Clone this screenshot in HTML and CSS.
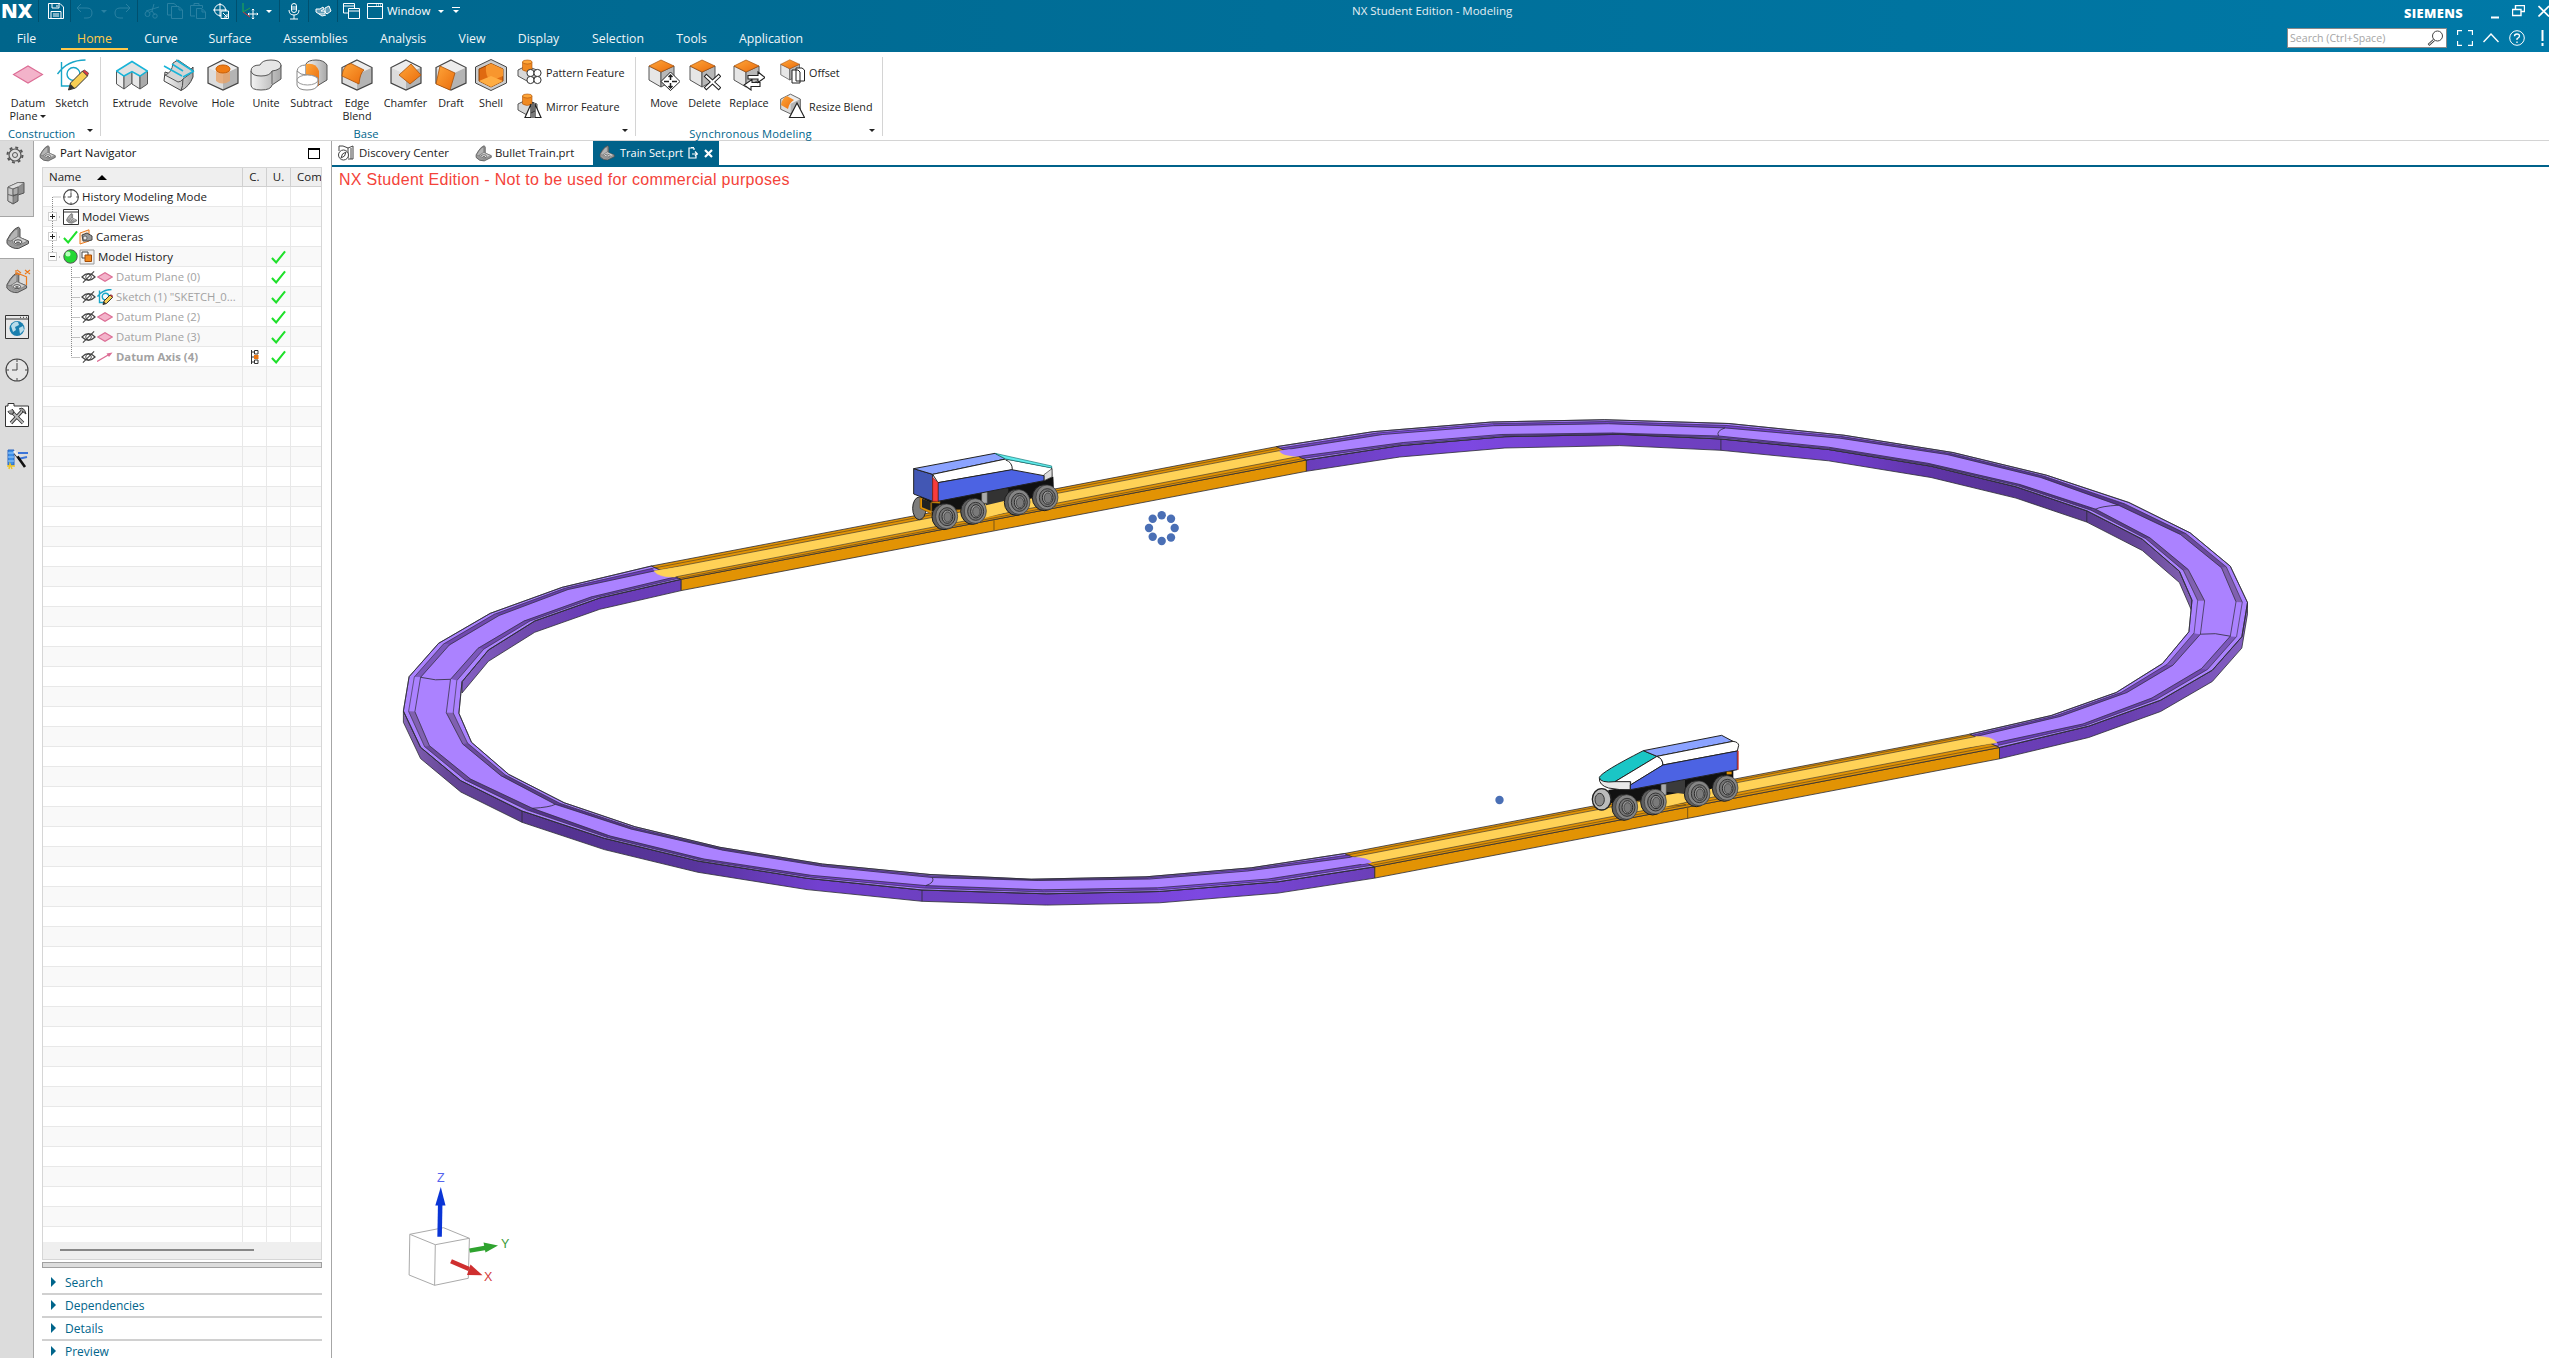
FILE: index.html
```html
<!DOCTYPE html>
<html lang="en">
<head>
<meta charset="utf-8">
<title>NX Student Edition - Modeling</title>
<link rel="stylesheet" href="styles.css">
</head>
<body>
<svg class="defs" width="0" height="0">
  <defs>
    <linearGradient id="steel" x1="0" y1="0" x2="1" y2="0"><stop offset="0" stop-color="#f4f4f4"/><stop offset="1" stop-color="#a8a8a8"/></linearGradient>
    <linearGradient id="orange" x1="0" y1="0" x2="1" y2="1"><stop offset="0" stop-color="#ffa63a"/><stop offset="1" stop-color="#ea6c0c"/></linearGradient>
    <symbol id="cube" viewBox="0 0 32 32">
      <path d="M16 1 31 8.500 16 15.500 1 8.500z" fill="#ececec"/><path d="M1 8.500 16 15.500V31L1 24z" fill="#dcdcdc"/><path d="M31 8.500 16 15.500V31L31 24z" fill="#b4b4b4"/>
      <path d="M16 1 31 8.500V24L16 31 1 24V8.500z" fill="none" stroke="#444" stroke-width="1.200"/>
    </symbol>
    <symbol id="topcube" viewBox="0 0 32 32">
      <path d="M1 7 13 13V28L1 21z" fill="#e6e6e6" stroke="#555"/><path d="M26 7 13 13V28L26 21z" fill="#b8b8b8" stroke="#555"/><path d="M13 1 26 7 13 13 1 7z" fill="url(#orange)" stroke="#a8500a" stroke-width=".7"/>
    </symbol>
    <symbol id="part" viewBox="0 0 24 24">
      <path d="M1.500 14 5 8Q9 2 13 1L14.500 3V11.500L23 15V17.500L13 22.500Q6 23 1.500 17.500z" fill="#9a9a9a" stroke="#4c4c4c"/>
      <path d="M2 14 5.500 8.500Q9 3 12.500 2.500V10.500L7 14Q5 16 2 14z" fill="#b4b4b4" stroke="#555" stroke-width=".6"/><path d="M12.500 10.500 22 15 13 19.500Q7 20 7 14z" fill="#d2d2d2" stroke="#666" stroke-width=".6"/><ellipse cx="12.500" cy="16" rx="4" ry="2.200" fill="#eee" stroke="#444"/><ellipse cx="12.500" cy="16.400" rx="2" ry="1" fill="#666"/>
    </symbol>
    <symbol id="clock" viewBox="0 0 24 24"><circle cx="12" cy="12" r="11" fill="#fff" fill-opacity=".3" stroke="#444" stroke-width="1.100" class="keep"/><path d="M12 5V12H7M12 1V4M12 20V23M1 12H4M20 12H23" fill="none" stroke="#444" class="keep"/></symbol>
    <symbol id="plane" viewBox="0 0 32 20"><path d="M1.500 10 16 1.500 30.500 10 16 18.500z" fill="#f3b3ca" stroke="#dc6d95" stroke-width="1.100" class="keep"/></symbol>
    <symbol id="sketch" viewBox="0 0 32 32">
      <path d="M5 3V27H19M1 15Q11 1 29 1" fill="none" stroke="#18a6c8" stroke-width="1.400" class="keep"/><circle cx="17" cy="15" r="6.500" fill="none" stroke="#18a6c8" stroke-width="1.400" class="keep"/>
      <path d="M12 31 14 24 26 12 31 17 19 29z" fill="#f8cf55" stroke="#333" class="keep"/><path d="M26 12 28 11 32 14 31 17z" fill="#e23b45" stroke="#333" stroke-width=".6"/><path d="M12 31 14 25 18 29z" fill="#333"/>
    </symbol>
    <symbol id="hidden" viewBox="0 0 16 14"><path d="M1 7Q8 0 15 7Q8 14 1 7z" fill="none" stroke="#444" stroke-width="1.200"/><circle cx="8" cy="7" r="3" fill="none" stroke="#444"/><path d="M2 13 14 1" stroke="#444" stroke-width="1.200"/></symbol>
    <symbol id="check" viewBox="0 0 16 14"><path d="M1 8 5.500 12.800 15 1" fill="none" stroke="#1fe02b" stroke-width="2.200"/></symbol>
    <symbol id="peg" viewBox="0 0 24 26">
      <path d="M1 11 9 7 20 11V17L10 22 1 17z" fill="#d8d8d8" stroke="#555"/><path d="M5.500 3V11Q10 14 15 11V3z" fill="#f08a22" stroke="#a8500a" stroke-width=".6"/><ellipse cx="10.300" cy="3" rx="4.800" ry="2" fill="#ffa63a" stroke="#a8500a" stroke-width=".6"/>
    </symbol>
  </defs>
</svg>

<header class="app-header">
  <div class="title-row">
    <div class="quick-bar">
      <div class="qgroup q-logo">NX</div>
      <div class="qgroup q-save"><svg width="16" height="16" viewBox="0 0 16 16"><path d="M.5.500H12L15.500 4V15.500H.5zM4 .5V5H11V.5M3 15.500V8.500H13V15.500M5 11H11M5 13H11M9 2V4" /></svg></div>
      <div class="qgroup q-undo dim"><svg width="17" height="16" viewBox="0 0 17 16"><path d="M5 1 1 5 5 9M1 5H11Q16 5 16 10T11 15H8"/></svg><i class="caret"></i><svg width="17" height="16" viewBox="0 0 17 16"><path d="M12 1 16 5 12 9M16 5H6Q1 5 1 10T6 15H9"/></svg></div>
      <div class="qgroup q-edit">
        <svg class="dim" width="16" height="16" viewBox="0 0 16 16"><path d="M2 8 15 4M10 1 8 8 11 12"/><circle cx="3.500" cy="11" r="2.500"/><circle cx="11" cy="13" r="2.200"/><path d="M5.500 9.500 8 8"/></svg>
        <svg class="dim" width="16" height="16" viewBox="0 0 16 16"><path d="M4 12H.5V.5H7L10 3M4.500 3.500H12L15.500 7V15.500H4.500zM12 4V7H15"/></svg>
        <svg class="dim" width="16" height="16" viewBox="0 0 16 16"><path d="M5 13H.5V2.500H12.500V5M4 2V.5H9V2M6.500 5.500H12L15.500 9V15.500H6.500zM12 6V9H15"/></svg>
        <svg width="16" height="16" viewBox="0 0 16 16"><circle cx="7" cy="7" r="5.500"/><path d="M7 0V14M0 7H14"/><path d="M8 8H15.500V15.500H8zM10 10 14 14M14 11V14H11" fill="#00678d"/></svg>
      </div>
      <div class="qgroup q-axes"><svg width="18" height="17" viewBox="0 0 18 17"><path d="M2 0V9" stroke="#25b04a"/><path d="M2 9 9 14" stroke="#d42f36"/><path d="M2 9 9 5" stroke="#25a04a"/><path d="M12 6V16M7 11H17M10.800 7.200 12 6 13.200 7.200M10.800 14.800 12 16 13.200 14.800M8.200 9.800 7 11 8.200 12.200M15.800 9.800 17 11 15.800 12.200"/></svg><i class="caret"></i></div>
      <div class="qgroup q-mic"><svg width="12" height="17" viewBox="0 0 12 17"><rect x="3.500" y=".5" width="5" height="9" rx="2.500"/><path d="M1 7Q1 12 6 12T11 7M6 12V16M2 16H10M4 4H8M4 6H8"/></svg></div>
      <div class="qgroup q-hand"><svg width="17" height="14" viewBox="0 0 17 14"><path d="M1 5H5L8 3 9 5 6 7H10V10H4L1 8zM10 4 14 2 16 7 12 10 10 8zM4 10 7 12 11 11" fill="#5f9db8"/></svg></div>
      <div class="qgroup q-windows">
        <svg width="17" height="16" viewBox="0 0 17 16"><path d="M5 10H.5V.5H11.500V5M.5 3H11.500"/><path d="M5.500 5.500H16.500V15.500H5.500zM5.500 8H16.500" fill="#00678d"/></svg>
        <svg width="16" height="16" viewBox="0 0 16 16"><path d="M.5.500H15.500V15.500H.5zM.5 3.500H15.500M9 2H10M11 2H12M13 2H14"/></svg>
        <span>Window</span><i class="caret"></i><i class="caret over"></i>
      </div>
    </div>
    <div class="app-title">NX Student Edition - Modeling</div>
    <div class="window-tools"><b>SIEMENS</b>
      <svg width="8" height="16" viewBox="0 0 8 16"><path d="M0 14.500H8" stroke-width="2"/></svg>
      <svg width="13" height="12" viewBox="0 0 13 12"><path d="M3.500 4V.5H12.500V6.500H9M.5 4.500H9V10.500H.5z" stroke-width="1.400"/></svg>
      <svg width="11" height="12" viewBox="0 0 11 12"><path d="M.5 1 11 11.500M.5 11.500 11 1" stroke-width="1.600"/></svg>
    </div>
  </div>
  <div class="menu-row">
    <nav><a class="m1">File</a><a class="m2 on">Home</a><a class="m3">Curve</a><a class="m4">Surface</a><a class="m5">Assemblies</a><a class="m6">Analysis</a><a class="m7">View</a><a class="m8">Display</a><a class="m9">Selection</a><a class="m10">Tools</a><a class="m11">Application</a></nav>
    <div class="menu-tools">
      <div class="search"><span>Search (Ctrl+Space)</span><svg width="17" height="16" viewBox="0 0 17 16"><circle cx="10.500" cy="6" r="5" stroke="#444"/><path d="M7 10 1.500 15" stroke="#444" stroke-width="2.500"/><path d="M7 10 2 14.500" stroke="#fff"/></svg></div>
      <svg width="16" height="16" viewBox="0 0 16 16"><path d="M.5 5V.5H5M11 .5H15.500V5M15.500 11V15.500H11M5 15.500H.5V11" stroke-width="1.300"/></svg>
      <svg width="16" height="10" viewBox="0 0 16 10"><path d="M.5 9 8 1 15.500 9" stroke-width="1.400"/></svg>
      <svg width="16" height="16" viewBox="0 0 16 16"><circle cx="8" cy="8" r="7.300"/><path d="M5.500 6.200Q5.500 4 8 4T10.500 6Q10.500 7.300 8 8.700V10M8 11.500V13" stroke-width="1.300"/></svg>
      <svg class="alert" width="3" height="16" viewBox="0 0 3 16"><path d="M1.500 0V11M1.500 13V16" stroke-width="2"/></svg>
    </div>
  </div>
</header>

<section class="ribbon">
  <div class="group g-con">
    <div class="tools">
      <div class="btn w56"><svg width="32" height="32" viewBox="0 0 32 32"><use href="#plane" y="5.500" width="32" height="20"/></svg><span>Datum<br>Plane<i class="caret"></i></span></div>
      <div class="btn w32"><svg width="33" height="32"><use href="#sketch" width="33" height="32"/></svg><span>Sketch</span></div>
    </div>
    <div class="group-name">Construction</div><i class="caret more"></i>
  </div>
  <div class="group g-base">
    <div class="tools">
      <div class="btn w46"><svg width="32" height="32" viewBox="0 0 32 32"><path d="M.5 12 8 17V30L.5 25z" fill="#eee" stroke="#555"/><path d="M8 17 16 12V24L8 30z" fill="#c4c4c4" stroke="#555"/><path d="M16 12 24 17V30L16 25z" fill="#e6e6e6" stroke="#555"/><path d="M31.500 12 24 17V30L31.500 25z" fill="#aaa" stroke="#555"/><path d="M.7 12 16 2.500 31.300 12 24 17 16 12.500 8 17z" fill="#e2e2e2" stroke="#18b4d8" stroke-width="1.500"/></svg><span>Extrude</span></div>
      <div class="btn w47"><svg width="32" height="32" viewBox="0 0 32 32"><path d="M2 13 20 19 30 8V18Q26 28 18 31.500L1 22z" fill="url(#steel)" stroke="#444"/><path d="M20 19Q20 28 18 31.500" stroke="#444" fill="none"/><path d="M2 16Q9 14 10 4L15 1 31 12 20 20Q18 23 15 23z" fill="#d4d4d4" stroke="#555"/><path d="M1 7 19 17M13 1 30 12M20 18 31 12M9 5 20 12" stroke="#18b4d8" stroke-width="1.500" fill="none"/></svg><span>Revolve</span></div>
      <div class="btn w42"><svg width="32" height="32" viewBox="0 0 32 32"><use href="#cube"/><path d="M9 9V22Q15 27 23 22V9z" fill="#e8a368" fill-opacity=".8"/><ellipse cx="16" cy="10" rx="7" ry="4" fill="#f07c14" stroke="#c85e06"/></svg><span>Hole</span></div>
      <div class="btn w44"><svg width="32" height="32" viewBox="0 0 32 32"><path d="M1 12V26Q1 31 11 31T22 26L31 20V6z" fill="url(#steel)" stroke="#555"/><path d="M1 12Q1 6 10 6Q12 1 21 1T31 6Q31 11 22 12Q20 17 11 17T1 12z" fill="#e6e6e6" stroke="#555"/><path d="M22 12V25" stroke="#666"/></svg><span>Unite</span></div>
      <div class="btn w47"><svg width="32" height="32" viewBox="0 0 32 32"><path d="M10 5V20L21 27 31 21V6Q28 1 20 1T10 5z" fill="url(#steel)" stroke="#555"/><path d="M10 5Q20 3 23 12V27L10 20z" fill="url(#orange)"/><path d="M1 12V26Q2 31 11 31T22 26V19Q18 16 11 16T1 12Q2 6 10 6" fill="#fff" stroke="#888"/><ellipse cx="11.500" cy="21" rx="10.500" ry="5" fill="#fff" stroke="#999"/></svg><span>Subtract</span></div>
      <div class="btn w44"><svg width="32" height="32" viewBox="0 0 32 32"><use href="#cube"/><path d="M10 4.500 23 11Q19 14 18 25L1 17Q2 6 10 4.500z" fill="url(#orange)" stroke="#aa5008" stroke-width=".8"/></svg><span>Edge<br>Blend</span></div>
      <div class="btn w53"><svg width="32" height="32" viewBox="0 0 32 32"><use href="#cube"/><path d="M21 5 31 16 20 25 9 16z" fill="url(#orange)" stroke="#aa5008" stroke-width=".8"/></svg><span>Chamfer</span></div>
      <div class="btn w38"><svg width="32" height="32" viewBox="0 0 32 32"><use href="#cube"/><path d="M5 7 20 14 15 31 1 25z" fill="url(#orange)" stroke="#aa5008" stroke-width=".8"/></svg><span>Draft</span></div>
      <div class="btn w42"><svg width="32" height="32" viewBox="0 0 32 32"><path d="M16 .5 31.500 8V24L16 31.500.5 24V8z" fill="#ccc" stroke="#444"/><path d="M16 4.500 28 10V22L16 28 4 22V10z" fill="#e06a10" stroke="#8a4208"/><path d="M16 4.500 28 10V17L16 22Q10 18 11 7z" fill="#f8962e"/><path d="M4 22 16 17 28 22 16 28z" fill="#ffad42"/></svg><span>Shell</span></div>
      <div class="stack">
        <div><svg width="25" height="26" viewBox="0 0 25 26"><use href="#peg" width="24" height="26"/><g fill="#fff" stroke="#333"><circle cx="13.500" cy="14" r="3.600"/><circle cx="20.500" cy="14" r="3.600"/><circle cx="13.500" cy="21" r="3.600"/><circle cx="20.500" cy="21" r="3.600"/></g></svg>Pattern Feature</div>
        <div><svg width="25" height="26" viewBox="0 0 25 26"><use href="#peg" width="24" height="26"/><path d="M8 24.500 14 11V24.500zM24 24.500 18 11V24.500zM16 9V25" fill="#fff" stroke="#222" stroke-width="1.200"/></svg>Mirror Feature</div>
      </div>
    </div>
    <div class="group-name base-name">Base</div><i class="caret more"></i>
  </div>
  <div class="group g-sync">
    <div class="tools">
      <div class="btn w48"><svg width="32" height="32" viewBox="0 0 32 32"><use href="#topcube"/><path d="M22.500 13 32 22.500 22.500 31.500 13 22.500z" fill="#fff" stroke="#222"/><path d="M22.500 16V21M22.500 24V29M16 22.500H21M24 22.500H29M20.500 18 22.500 16 24.500 18M20.500 27 22.500 29 24.500 27" fill="none" stroke="#222" stroke-width="1.500"/></svg><span>Move</span></div>
      <div class="btn w33"><svg width="32" height="32" viewBox="0 0 32 32"><use href="#topcube"/><path d="M16 16 31 30M31 16 16 30" stroke="#222" stroke-width="4"/><path d="M16.700 16.700 30.300 29.300M30.300 16.700 16.700 29.300" stroke="#fff" stroke-width="2"/></svg><span>Delete</span></div>
      <div class="btn w56"><svg width="32" height="32" viewBox="0 0 32 32"><use href="#topcube"/><path d="M15 16.500H25V13L32 18.500 25 23.500V20H15zM27 23.500H19V20.500L11 26 18 31V27.500H27z" fill="#fff" stroke="#222" stroke-width="1.100"/></svg><span>Replace</span></div>
      <div class="stack">
        <div><svg width="25" height="26" viewBox="0 0 25 26"><use href="#topcube" width="24" height="24"/><path d="M12 11H18L20 13V24H12zM16 9H22L24.500 11V22H16z" fill="#fff" stroke="#222"/></svg>Offset</div>
        <div><svg width="25" height="26" viewBox="0 0 25 26"><use href="#cube" width="21" height="22"/><path d="M7 3 14 7Q9 10 8 16L1 12Q2 5 7 3z" fill="url(#orange)"/><path d="M17 10 24.500 24.500H9.500z" fill="#fff" stroke="#222" stroke-width="1.200"/></svg>Resize Blend</div>
      </div>
    </div>
    <div class="group-name">Synchronous Modeling</div><i class="caret more"></i>
  </div>
</section>

<main class="workspace">
  <aside class="resource-bar">
    <div class="res r1"><svg width="18" height="18" viewBox="0 0 18 18"><circle cx="9" cy="9" r="6" fill="none" stroke="#555" stroke-width="1.200"/><circle cx="9" cy="9" r="7.500" fill="none" stroke="#555" stroke-width="2" stroke-dasharray="2.900 3"/><circle cx="9" cy="9" r="2.500" fill="none" stroke="#555"/></svg></div>
    <div class="res r2"><svg width="18" height="24" viewBox="0 0 18 24"><path d="M1 6 11 1.500 17 1.500V12L11 14V20L6 23 1 20z" fill="#8f8f8f" stroke="#555"/><path d="M1 6 11 1.500 17 2 11 6 6 8z" fill="#dedede" stroke="#666" stroke-width=".6"/><path d="M1 6.500 6 8V22.500L1 20z" fill="#c6c6c6" stroke="#555" stroke-width=".6"/><path d="M6 8 11 6V13L6 15zM1 13.500 6 15 11 13" fill="#ababab" stroke="#555" stroke-width=".8"/></svg></div>
    <div class="res r3"><svg width="25" height="24"><use href="#part" width="25" height="24"/></svg></div>
    <div class="res r4"><svg width="26" height="26" viewBox="0 0 26 26"><use href="#part" y="3" width="23" height="22"/><path d="M11 1 11 6M21.500 8V16M12 4 22 8M12 1 16 4M20 1 25 5M25 1 20 5M11 4 15 6" stroke="#ec7a1c" stroke-width="1.200" fill="none"/></svg></div>
    <div class="res r5"><svg width="24" height="24" viewBox="0 0 24 24"><path d="M.5.500H23.500V23.500H.5zM.5 4H23.500M15 2.300H16M18 2.300H19M21 2.300H22" fill="#e8e8e8" stroke="#333"/><circle cx="12" cy="13.500" r="7.500" fill="#1a7fae"/><path d="M6 11Q9 6 13 7L14 10 10 12 11 15 8 17zM14 13 18 11 19 15 15 19z" fill="#b8dcea"/></svg></div>
    <div class="res r6"><svg width="24" height="24"><use href="#clock" width="24" height="24"/></svg></div>
    <div class="res r7"><svg width="24" height="24" viewBox="0 0 24 24"><path d="M.5 23.500V3H3V.5H9V3H23.500V23.500z" fill="#fff" stroke="#333"/><path d="M6 20 18 7M18 20 7 9" stroke="#333" stroke-width="3.400"/><path d="M6 20 18 7M18 20 7 9" stroke="#bbb" stroke-width="1.800"/><path d="M3 8Q4 12 8 11Q10 8 7 6M14 6Q19 3 21 11L17 8" fill="#999" stroke="#333"/></svg></div>
    <div class="res r8"><svg width="24" height="22" viewBox="0 0 24 22"><path d="M2 2H8V17H2z" fill="#3d8fe6" stroke="#2c66c0"/><path d="M2 5H8M2 9H8M2 13H8" stroke="#9dd0ff"/><path d="M22 5H12M21 9 12 11" stroke="#3c74d8" stroke-width="2"/><path d="M1 18H9M3 21 4 16 6 21" stroke="#eec52a" stroke-width="1.500" fill="none"/><path d="M9 5 19 19" stroke="#111" stroke-width="2.600"/><path d="M8 3 12 8" stroke="#eee" stroke-width="2.600"/></svg></div>
  </aside>

  <section class="navigator">
    <div class="nav-title"><svg width="17" height="17"><use href="#part" width="17" height="17"/></svg><span>Part Navigator</span><i class="maximize"></i></div>
    <div class="grid">
      <div class="row head"><span class="name">Name<i class="sort"></i></span><span>C.</span><span>U.</span><span>Com</span></div>
      <div class="rows">
        <div class="row"><span class="name l0"><svg width="16" height="16"><use href="#clock" width="16" height="16"/></svg>History Modeling Mode</span><span></span><span></span><span></span></div>
        <div class="row"><span class="name l0"><i class="exp plus"></i><svg width="16" height="16" viewBox="0 0 16 16"><path d="M.5.500H15.500V15.500H.5zM.5 3H15.500" fill="#fff" stroke="#333"/><use href="#part" x="3" y="4" width="11" height="11"/></svg>Model Views</span><span></span><span></span><span></span></div>
        <div class="row"><span class="name l0"><i class="exp plus"></i><svg width="15" height="14"><use href="#check" width="15" height="14"/></svg><svg width="14" height="16" viewBox="0 0 14 16"><path d="M1 4 10 .8V12L1 15z" fill="#fce9d6" stroke="#ec7a1c"/><path d="M3 6 8 4 13 7V11L9 12 4 12z" fill="#999" stroke="#444"/><circle cx="6" cy="9" r="2" fill="#e8e8e8" stroke="#444" stroke-width=".7"/></svg>Cameras</span><span></span><span></span><span></span></div>
        <div class="row"><span class="name l0"><i class="exp"></i><svg width="15" height="15" viewBox="0 0 15 15"><circle cx="7.500" cy="7.500" r="6.700" fill="#22d834" stroke="#555"/><circle cx="5" cy="5" r="2.500" fill="#b6ffbb"/></svg><svg width="16" height="16" viewBox="0 0 16 16"><path d="M1 1H15V15H1z" fill="#f0f0f0" stroke="#999"/><path d="M3 3H9V9H3z" fill="#fff" stroke="#444"/><path d="M6 6H12.500V12.500H6z" fill="#f28a1e" stroke="#a34d08"/></svg>Model History</span><span></span><span><svg width="15" height="14"><use href="#check"/></svg></span><span></span></div>
        <div class="row off"><span class="name l1"><svg width="15" height="14"><use href="#hidden"/></svg><svg width="16" height="10"><use href="#plane"/></svg>Datum Plane (0)</span><span></span><span><svg width="15" height="14"><use href="#check"/></svg></span><span></span></div>
        <div class="row off"><span class="name l1"><svg width="15" height="14"><use href="#hidden"/></svg><svg width="16" height="16"><use href="#sketch"/></svg>Sketch (1) "SKETCH_0...</span><span></span><span><svg width="15" height="14"><use href="#check"/></svg></span><span></span></div>
        <div class="row off"><span class="name l1"><svg width="15" height="14"><use href="#hidden"/></svg><svg width="16" height="10"><use href="#plane"/></svg>Datum Plane (2)</span><span></span><span><svg width="15" height="14"><use href="#check"/></svg></span><span></span></div>
        <div class="row off"><span class="name l1"><svg width="15" height="14"><use href="#hidden"/></svg><svg width="16" height="10"><use href="#plane"/></svg>Datum Plane (3)</span><span></span><span><svg width="15" height="14"><use href="#check"/></svg></span><span></span></div>
        <div class="row off strong"><span class="name l1"><svg width="15" height="14"><use href="#hidden"/></svg><svg width="16" height="10" viewBox="0 0 16 10"><path d="M0 9.500 12 2.500" stroke="#dc6d95" stroke-width="1.300"/><path d="M15.500.5 12 5 9.500 1.500z" fill="#dc6d95"/></svg>Datum Axis (4)</span><span><svg width="9" height="14" viewBox="0 0 9 14"><path d="M1.500 0V14M1.500 2H4M1.500 7H4M1.500 12H4M4.500.5H8V4H4.500zM4.500 10H8V13.500H4.500z" fill="none" stroke="#333"/><path d="M4 5H8.500V9H4z" fill="#ea7410"/></svg></span><span><svg width="15" height="14"><use href="#check"/></svg></span><span></span></div>
        <svg class="tree-lines" width="60" height="180"><path d="M9.500 10V72M10.500 10H18M16 30H18M16 50H18M16 70H18M28.500 80V170.500M29.500 90.500H37M29.500 110.500H37M29.500 130.500H37M29.500 150.500H37M29.500 170.500H37" fill="none" stroke="#8a8a8a" stroke-dasharray="1 1"/></svg>
      </div>
      <div class="hscroll"><i></i></div>
    </div>
    <div class="splitter"></div>
    <div class="drawer">Search</div><div class="drawer">Dependencies</div><div class="drawer">Details</div><div class="drawer">Preview</div>
  </section>

  <section class="viewport">
    <div class="tabs">
      <div class="tab t1"><svg width="16" height="16" viewBox="0 0 16 16"><path d="M1 1H5L10 3 15 1V14H10M1 1V6M10 3V13M13 3V14" fill="none" stroke="#444"/><circle cx="5.500" cy="10" r="5" fill="#fff" stroke="#444"/><path d="M3 13 4.500 9 8 7 6.500 11z" fill="none" stroke="#444"/></svg><span>Discovery Center</span></div>
      <div class="tab t2"><svg width="17" height="17"><use href="#part"/></svg><span>Bullet Train.prt</span></div>
      <div class="tab t3 on"><svg width="16" height="16"><use href="#part"/></svg><span>Train Set.prt</span><svg class="out" width="10" height="12" viewBox="0 0 10 12"><path d="M6 1H1V11H8V9M6 1V3M3 .5H6M4 7H9M7 4.500 9.300 7 7 9" fill="none" stroke="#fff" stroke-width="1.200"/></svg><svg width="9" height="9" viewBox="0 0 9 9"><path d="M1 1 8 8M8 1 1 8" stroke="#fff" stroke-width="2.200"/></svg></div>
    </div>
    <div class="canvas">
      <svg class="scene" width="2217" height="1191" viewBox="332 167 2217 1191">
        <defs>
          <linearGradient id="g-bottom" gradientUnits="userSpaceOnUse" x1="403" x2="1375" y1="0" y2="0"><stop offset="0" stop-color="#8464b4"/><stop offset=".05" stop-color="#644596"/><stop offset=".17" stop-color="#543391"/><stop offset=".3" stop-color="#58359c"/><stop offset=".43" stop-color="#7340d0"/><stop offset=".54" stop-color="#6d40c0"/><stop offset=".68" stop-color="#7140c6"/><stop offset=".82" stop-color="#7d48e2"/><stop offset="1" stop-color="#6b3fb8"/></linearGradient>
          <linearGradient id="g-top" gradientUnits="userSpaceOnUse" x1="1306" x2="2193" y1="0" y2="0"><stop offset="0" stop-color="#693dba"/><stop offset=".18" stop-color="#7d48e2"/><stop offset=".33" stop-color="#7340c6"/><stop offset=".47" stop-color="#6d40be"/><stop offset=".6" stop-color="#7340d0"/><stop offset=".7" stop-color="#6035a8"/><stop offset=".82" stop-color="#54338f"/><stop offset=".93" stop-color="#644596"/><stop offset="1" stop-color="#8464b4"/></linearGradient>
          <linearGradient id="g-left" gradientUnits="userSpaceOnUse" x1="460" x2="681" y1="0" y2="0"><stop offset="0" stop-color="#8460c2"/><stop offset=".3" stop-color="#704aae"/><stop offset=".6" stop-color="#693ab8"/><stop offset="1" stop-color="#6b3fb8"/></linearGradient>
          <linearGradient id="g-right" gradientUnits="userSpaceOnUse" x1="2000" x2="2248" y1="0" y2="0"><stop offset="0" stop-color="#6a3db8"/><stop offset=".5" stop-color="#693fb0"/><stop offset="1" stop-color="#8460c2"/></linearGradient>
          <g id="wheel"><ellipse cx="-3" cy="1" rx="36" ry="39" fill="#5e5e5e" stroke="#1c1c1c" stroke-width="3"/><ellipse cx="5" rx="33" ry="37" fill="#858585" stroke="#333" stroke-width="2"/><ellipse cx="6" cy="1" rx="24" ry="27" fill="#757575" stroke="#333" stroke-width="3"/><ellipse cx="7" cy="1" rx="16" ry="20" fill="#949494" stroke="#2c2c2c" stroke-width="3"/><ellipse cx="8" cy="2" rx="11" ry="15" fill="#7a7a7a" stroke="#333" stroke-width="2"/></g>
        </defs>
        <g id="track"></g>
        <g transform="translate(880 420) scale(.33333)" stroke-linejoin="round">
          <path d="M342 296V331" stroke="#7a5516" stroke-width="3"/>
          <ellipse cx="118" cy="265" rx="20" ry="34" fill="#7d7d7d" stroke="#222" stroke-width="3"/>
          <path d="M120 225 520 170 522 215 380 255 160 275 122 262z" fill="#111"/>
          <path d="M310 250 375 240 385 275 290 300 318 250z" fill="#ffd257"/><path d="M318 205H385V240L318 256z" fill="#333"/><path d="M305 215H322V250H305z" fill="#aaa" stroke="#444" stroke-width="2"/>
          <path d="M120 232V265L155 282V245L180 242V250L152 248" fill="#e29304" stroke="#7a5516" stroke-width="2"/><path d="M126 236 152 246V272L126 262z" fill="#222"/>
          <path d="M101 146 158 163V244L101 222z" fill="#4257b4" stroke="#222" stroke-width="3"/>
          <path d="M101 146 345 100 377 117 158 163z" fill="#8ba3ff" stroke="#222" stroke-width="3"/>
          <path d="M158 163 377 117 515 143 516 170 492 182 395 150 174 188z" fill="#fff" stroke="#222" stroke-width="3"/>
          <path d="M345 100 515 138V144L377 117z" fill="#62ecec" stroke="#147474" stroke-width="2"/>
          <path d="M492 164 516 146V171L492 182z" fill="#ddd" stroke="#333" stroke-width="2"/>
          <path d="M174 188 395 149 492 167V182L174 244z" fill="#4c63e3" stroke="#222" stroke-width="3"/><path d="M377 120Q397 126 397 149" fill="none" stroke="#222" stroke-width="3"/>
          <path d="M158 172 174 188V244H158z" fill="#f83c3c" stroke="#8b2020" stroke-width="2"/>
          <use href="#wheel" x="195" y="289"/><use href="#wheel" x="281" y="273"/><use href="#wheel" x="412" y="246"/><use href="#wheel" x="496" y="232"/>
        </g>
        <g transform="translate(1560 710) scale(.33333)" stroke-linejoin="round">
          <path d="M383 292V327" stroke="#7a5516" stroke-width="3"/><path d="M330 262 378 285 310 290" fill="none" stroke="#7a5516" stroke-width="3"/>
          <path d="M145 240 520 180V215L380 260 150 280z" fill="#111"/>
          <path d="M316 256 372 246 378 275 310 292z" fill="#ffd257"/><path d="M318 210H375V252L318 245z" fill="#3b3b3b"/><path d="M303 222H319V255H303z" fill="#aaa" stroke="#444" stroke-width="2"/>
          <ellipse cx="125" cy="268" rx="28" ry="32" fill="#bbb" stroke="#222" stroke-width="4"/><ellipse cx="119" cy="269" rx="14" ry="19" fill="#8d8d8d" stroke="#333" stroke-width="3"/>
          <path d="M118 205Q117 225 145 234Q180 241 211 239V214L150 212z" fill="#e8e8e8" stroke="#222" stroke-width="3"/>
          <path d="M118 202Q126 185 250 122L291 139 165 215Q120 220 118 202z" fill="#1ac6c6" stroke="#222" stroke-width="3"/>
          <path d="M165 215 291 139Q308 145 309 165L212 225V215z" fill="#fff" stroke="#222" stroke-width="3"/>
          <path d="M250 122 485 76 519 94 291 139z" fill="#8ba3ff" stroke="#222" stroke-width="3"/>
          <path d="M291 139 519 94Q535 96 536 106L532 123 309 165Q308 145 291 139z" fill="#fff" stroke="#222" stroke-width="3"/>
          <path d="M309 165 532 123V179L211 239V225z" fill="#4c63e3" stroke="#222" stroke-width="3"/><path d="M534 122V179" stroke="#d32f2f" stroke-width="4"/><path d="M500 185H515V193H500z" fill="#e29304"/>
          <use href="#wheel" x="195" y="291"/><use href="#wheel" x="281" y="275"/><use href="#wheel" x="412" y="250"/><use href="#wheel" x="496" y="234"/>
        </g>
        <g fill="#4a6fb5"><circle cx="1161.700" cy="515.300" r="4.200"/><circle cx="1171" cy="518.800" r="4.200"/><circle cx="1174.700" cy="528" r="4.200"/><circle cx="1171" cy="537.500" r="4.200"/><circle cx="1161.700" cy="541" r="4.200"/><circle cx="1152.700" cy="536.800" r="4.200"/><circle cx="1149" cy="528" r="4.200"/><circle cx="1152.700" cy="518.800" r="4.200"/><circle cx="1499.500" cy="800" r="4.200"/></g>
        <g class="triad">
          <path d="M443.500 1227.700 409.800 1234.300 409.100 1275 434.600 1285.300 468.300 1278.300 469.400 1238.300zM409.800 1234.300 435.300 1244.700 469.400 1238.300M435.300 1244.700 434.600 1285.300" fill="#fff" stroke="#aaa"/>
          <path d="M439.600 1236.700 440.200 1204" stroke="#0a35d6" stroke-width="4.500"/><path d="M435.300 1205.500 440.800 1187 445.500 1205.500z" fill="#0a35d6"/>
          <path d="M469.500 1250.600 486 1247.700" stroke="#2fa32f" stroke-width="4.500"/><path d="M483.500 1242.500 498 1245.600 485.500 1252.500z" fill="#2fa32f"/>
          <path d="M451 1261.300 469 1269" stroke="#cf2f2f" stroke-width="4.500"/><path d="M470.500 1264.500 482.500 1275.300 467 1275z" fill="#cf2f2f"/>
          <text x="437" y="1181.500" fill="#5565ee">Z</text><text x="501" y="1247.500" fill="#3b9c3b">Y</text><text x="484" y="1281" fill="#d43c3c">X</text>
        </g>
      </svg>
      <div class="watermark">NX Student Edition - Not to be used for commercial purposes</div>
    </div>
  </section>
</main>
<script src="track.js"></script>
</body>
</html>
```
FILE: styles.css
```css
* { box-sizing: border-box; }
body { margin: 0; width: 2549px; height: 1358px; overflow: hidden; background: #fff; color: #222; font: 11.4px/14px "Open Sans", "Noto Sans", sans-serif; display: flex; flex-direction: column; }
svg { flex: none; display: block; }
.defs { position: absolute; }
.keep { vector-effect: non-scaling-stroke; }
.caret { display: inline-block; border: 3px solid transparent; border-top-color: currentColor; border-bottom: 0; }

.app-header { height: 52px; flex: none; background: linear-gradient(90deg, #00658b, #0079a7); color: #fff; }
.app-header svg { fill: none; stroke: #fff; }
.title-row { height: 24px; display: flex; align-items: center; padding-bottom: 2px; }
.quick-bar { width: 1352px; flex: none; height: 22px; display: flex; }
.qgroup { display: flex; align-items: center; border-right: 1px solid #00506f; }
.q-logo { width: 39px; padding-left: 1px; font-size: 20px; font-weight: 800; }
.q-save { width: 32px; padding-left: 9px; }
.q-undo { width: 67px; padding: 0 6px 0 5px; justify-content: space-between; }
.q-undo.dim { color: #2a81a2; }
.app-header .dim svg, .app-header svg.dim { stroke: #2a81a2; }
.q-edit { width: 99px; padding: 0 7px 0 6px; justify-content: space-between; }
.q-axes { width: 43px; padding: 0 7px 0 4px; justify-content: space-between; }
.q-mic { width: 29px; padding-left: 8px; }
.q-hand { width: 29px; padding-left: 6px; }
.q-windows { padding-left: 5px; border: 0; gap: 7px; font-size: 11.500px; }
.q-windows span { margin-left: -3px; width: 44px; }
.q-windows .over { margin-left: 2px; position: relative; }
.over::before { content: ""; position: absolute; left: -4px; top: -6px; width: 8px; border-top: 1px solid #fff; }
.app-title { font-size: 11.500px; color: #e4eff4; white-space: nowrap; }
.window-tools { margin-left: auto; height: 22px; display: flex; align-items: center; }
.window-tools b { font-size: 12.800px; font-weight: 800; line-height: 22px; margin-right: 28px; letter-spacing: .4px; padding-top: 3px; }
.window-tools svg + svg { margin-left: 13px; }
.menu-row { height: 28px; display: flex; justify-content: space-between; }
nav { display: flex; font-size: 12.300px; line-height: 29px; }
nav a { text-align: center; white-space: nowrap; color: #f0f6f9; height: 26px; }
.m1 { width: 53px; } .m2 { width: 67px; margin: 0 8px; } .m3 { width: 50px; } .m4 { width: 88px; } .m5 { width: 83px; } .m6 { width: 92px; } .m7 { width: 46px; } .m8 { width: 87px; } .m9 { width: 72px; } .m10 { width: 75px; } .m11 { width: 84px; }
nav a.on { color: #ffc84a; border-bottom: 2px solid #ffc84a; }
.menu-tools { display: flex; align-items: center; height: 28px; gap: 10px; padding-right: 5px; }
.menu-tools .alert { margin-left: 6px; }
.search { width: 160px; height: 20px; background: #fff; border: 1px solid #888; display: flex; align-items: center; justify-content: space-between; padding: 0 2px; color: #a5a5a5; font-size: 10.600px; }

.ribbon { height: 89px; flex: none; display: flex; border-bottom: 1px solid #d4d4d4; font-size: 10.800px; line-height: 13px; }
.group { position: relative; height: 88px; padding-top: 7px; }
.group::after { content: ""; position: absolute; right: 0; top: 5px; height: 79px; border-right: 1px solid #d4d4d4; }
.g-con { width: 101px; } .g-base { width: 535px; padding-left: 8px; } .g-sync { width: 247px; padding-left: 4px; }
.tools { display: flex; height: 68px; }
.btn { display: flex; flex-direction: column; align-items: center; gap: 5px; text-align: center; white-space: nowrap; flex: none; }
.btn .caret { margin-left: 3px; vertical-align: 2px; }
.w32 { width: 32px; } .w33 { width: 33px; } .w38 { width: 38px; } .w42 { width: 42px; } .w44 { width: 44px; } .w46 { width: 46px; } .w47 { width: 47px; } .w48 { width: 48px; } .w53 { width: 53px; } .w56 { width: 56px; }
.stack { padding-left: 5px; display: flex; flex-direction: column; gap: 8px; white-space: nowrap; }
.g-sync .stack { padding-left: 3px; }
.stack div { display: flex; align-items: center; gap: 4px; height: 26px; }
.group-name { color: #00658b; text-align: center; padding-right: 18px; font-size: 11.200px; }
.g-sync .group-name { padding-right: 22px; letter-spacing: .15px; }
.base-name { padding-right: 13px; }
.more { position: absolute; right: 8px; top: 77px; }

.workspace { flex: 1; display: flex; min-height: 0; }
.resource-bar { width: 34px; background: #dcdcdc; border-right: 1px solid #a6a6a6; display: flex; flex-direction: column; }
.res { display: flex; align-items: center; padding-left: 5px; height: 44px; flex: none; }
.r1 { height: 28px; padding-left: 6px; } .r2 { height: 47px; padding-left: 7px; }
.r3 { width: 34px; height: 43px; background: #fff; border-top: 1px solid #a6a6a6; border-bottom: 1px solid #a6a6a6; }
.r4 { height: 46px; } .r6 { height: 42px; } .r7 { height: 47px; } .r8 { height: 42px; padding-left: 6px; }

.navigator { width: 298px; border-right: 1px solid #a6a6a6; padding: 0 9px 0 8px; }
.nav-title { height: 26px; display: flex; align-items: center; gap: 4px; padding: 0 2px 2px 0; margin-left: -3px; color: #111; }
.maximize { width: 12px; height: 11px; border: 1px solid #000; border-top-width: 2px; margin-left: auto; }
.grid { height: 1093px; border: 1px solid #d6d6d6; display: flex; flex-direction: column; position: relative; }
.row { height: 20px; display: grid; grid-template-columns: 200px 24px 24px 1fr; border-bottom: 1px solid #e8e8e8; line-height: 18px; font-size: 11.500px; }
.row > span { border-right: 1px solid #e8e8e8; overflow: hidden; white-space: nowrap; display: flex; align-items: center; justify-content: center; }
.row > span:last-child { border: 0; }
.row .name { justify-content: flex-start; padding-left: 6px; }
.head { height: 19px; background: #efefef; border-color: #d0d0d0; }
.head > span { border-color: #d0d0d0; }
.head > span:last-child { justify-content: flex-start; padding-left: 6px; }
.sort { border: 5px solid transparent; border-bottom-color: #000; border-top: 0; margin-left: 16px; }
.rows { flex: 1; position: relative; background: repeating-linear-gradient(#fff 0 19px, #e8e8e8 19px 20px, #f9f9f9 20px 39px, #e8e8e8 39px 40px); }
.rows::after { content: ""; position: absolute; inset: 180px 0 0; background: linear-gradient(90deg, transparent 199px, #e8e8e8 199px 200px, transparent 200px 223px, #e8e8e8 223px 224px, transparent 224px 247px, #e8e8e8 247px 248px, transparent 248px); }
.row .l0 { padding-left: 20px; position: relative; }
.l0 svg { margin-right: 3px; } .l0 svg + svg { margin-left: -2px; }
.row .l1 { padding-left: 38px; font-size: 11.300px; }
.l1 svg { margin-right: 1px; } .l1 svg + svg { margin-right: 3px; }
.off { color: #a2a2a2; } .strong { font-weight: 700; }
.exp { position: absolute; z-index: 1; left: 5px; top: 5px; width: 9px; height: 9px; border: 1px solid #d0d0d0; background: linear-gradient(#222, #222) 1px 3px / 5px 1px no-repeat, #fff; }
.exp.plus { background: linear-gradient(#222, #222) 1px 3px / 5px 1px no-repeat, linear-gradient(#222, #222) 3px 1px / 1px 5px no-repeat, #fff; }
.tree-lines { position: absolute; left: 0; top: 0; }
.hscroll { height: 17px; background: #efefef; padding: 7px 0 0 17px; }
.hscroll i { display: block; width: 194px; height: 2px; background: #888; }
.splitter { margin: 2px 0 4px; height: 6px; background: #dcdcdc; border: 1px solid #a0a0a0; }
.drawer { height: 23px; border-bottom: 2px solid #d0d0d0; line-height: 21px; padding-left: 23px; color: #00658b; position: relative; font-size: 12px; }
.drawer::before { content: ""; position: absolute; left: 9px; top: 5px; border: 5px solid transparent; border-left-color: #00658b; border-right: 0; }

.viewport { flex: 1; display: flex; flex-direction: column; }
.tabs { height: 26px; border-bottom: 2px solid #00628a; display: flex; white-space: nowrap; }
.tab { display: flex; align-items: center; gap: 5px; padding-left: 6px; }
.t1 { width: 137px; } .t2 { width: 124px; gap: 3px; } .t3 { width: 126px; gap: 5px; }
.tab.on { background: #00628a; color: #fff; font-size: 11px; }
.t3 span { width: 62px; }
.t3 .out { margin: 0 1px; }
.canvas { position: relative; flex: 1; }
.scene { position: absolute; left: 0; top: 0; }
.triad text { font: 12.500px "Liberation Sans", Arial, sans-serif; }
.watermark { position: absolute; left: 7px; top: 3px; color: #f4433a; font: 16px/20px "Liberation Sans", Arial, sans-serif; letter-spacing: .3px; white-space: nowrap; }
```
FILE: track.js
```js
// Curved half of the track, as matching points along its four long edges.
// The other half is the same shape turned by 180 degrees about the centre.
const outer = [[651.4,566],[562.2,587.3],[490.3,613.3],[438.6,643.3],[409.1,676.7],[403.4,711],[420.6,747.3],[460.8,780.7],[522,811],[604.3,838.3],[698,861],[807,878.3],[922,890],[1046.5,893.8],[1159.4,891.5],[1278,881.8],[1374.8,866.8]];
const inner = [[681.2,579.3],[599.7,598],[534.7,621],[488.4,650],[462,681.7],[458.9,713.3],[471.5,742.3],[508.6,774.3],[564.1,802.7],[634.9,826.7],[719.9,847.3],[822.4,864],[930,874.5],[1031.2,879.2],[1146,876.8],[1251.2,867.8],[1344.6,853.5]];
const bedOuter = [[654,571],[568,589.5],[499,615.5],[449.3,645],[420.6,677.3],[414.9,711.7],[429.4,745.7],[470.4,779],[532.4,808.3],[610,836],[703.8,859],[811,875.3],[925.8,885.6],[1042.6,889.8],[1157.4,887.8],[1268.4,879],[1371.8,862.8]];
const bedInner = [[675,577],[591,597],[524,621],[478,648.3],[450.5,679.3],[446.3,712.7],[462.7,744],[501,775.7],[555.3,804.3],[631,829],[723,850.2],[822.4,866.3],[932.4,877.5],[1038.8,880.5],[1149.8,879],[1247.4,871],[1352.6,857]];
const wall = ['#6a3db8','#6840ae','#7048b0','#7b57bb','#ab82ff','#8060b0','#6b4a9c','#5a3c8c','#54338c','#58369c','#653ab0','#7440cc','#6d40c0','#7040c4','#7d48e2','#6f42c0'];
const centre = [1325.45, 656.75];
const depth = 11.3;
const ink = '#2b2b33';

const turn = p => [2 * centre[0] - p[0], 2 * centre[1] - p[1]];
const mix = (a, b, t) => a.map((p, i) => [p[0] + (b[i][0] - p[0]) * t, p[1] + (b[i][1] - p[1]) * t]);
const str = pts => pts.map(p => p[0].toFixed(1) + ' ' + p[1].toFixed(1)).join(' ');
const track = document.getElementById('track');
let out = '';
const poly = (pts, fill, stroke = 'none', w = .8) => { out += `<path d="M${str(pts)}z" fill="${fill}" stroke="${stroke}" stroke-width="${w}" stroke-linejoin="round"/>`; };
const line = (pts, w = .8, color = ink) => { out += `<path d="M${str(pts)}" fill="none" stroke="${color}" stroke-width="${w}"/>`; };
const between = (a, b) => a.concat([...b].reverse());
const face = (pts, fill) => poly(between(pts, pts.map(p => [p[0], p[1] + depth])), fill, ink);
const seam = p => line([p, [p[0], p[1] + depth]]);

function curve(map) {
  const [o, n, bo, bi] = [outer, inner, bedOuter, bedInner].map(a => a.map(map));
  poly(between(o, n), '#ab82ff', ink);
  for (const [edge, bed] of [[o, bo], [n, bi]]) {
    const rim = mix(edge, bed, 0.45);
    for (let i = 0; i < wall.length; i++) poly([rim[i], rim[i + 1], bed[i + 1], bed[i]], wall[i], wall[i], .3);
    line(rim, .6);
    line(bed, .7);
    line(edge, .7);
  }
  for (const i of [4, 8, 12]) {
    const [a, b] = [bo[i], bi[i]];
    const k = i === 4 ? [0, 3] : [6, 1];
    const s = map([0, 0])[0] === 0 ? 1 : -1;
    out += `<path d="M${str([a])}Q${(a[0] + b[0]) / 2 + k[0] * s} ${(a[1] + b[1]) / 2 + k[1] * s} ${str([b])}" fill="none" stroke="${ink}" stroke-width=".8"/>`;
  }
}

function straight(map) {
  const ends = [outer, bedOuter, bedInner, inner].map(a => [a[0], turn(a[16])]);
  const [o, bo, bi, n] = ends.map(e => e.map(map));
  poly(between(o, n), '#e29304', ink, .8);
  poly(between(bo, bi), '#ffd257', ink, .6);
  line(mix(o, bo, .45), .5);
  line(mix(n, bi, .4), .5);
}

const same = p => p;
face(inner.slice(0, 5), 'url(#g-left)');
face(outer.slice(5), 'url(#g-bottom)');
face(inner.slice(5).map(turn), 'url(#g-top)');
face(outer.slice(0, 6).map(turn), 'url(#g-right)');
face([inner[0], turn(inner[16])], '#e29304');
face([outer[16], turn(outer[0])], '#e29304');
curve(same);
curve(turn);
straight(same);
straight(turn);
seam(outer[8]); seam(outer[12]);
seam(turn(inner[8])); seam(turn(inner[12]));

// Rounded tongues where straight and curved pieces lock together.
for (const m of [same, turn]) {
  const s = m === same ? 1 : -1;
  const [a, b] = [m(bedOuter[0]), m(bedInner[0])];
  out += `<path d="M${str([a])}Q${a[0] + 5 * s} ${a[1] + 6.5 * s} ${str([b])}L${a[0] + 26 * s} ${a[1] - 4 * s}z" fill="#ffd257" stroke="#ffd257" stroke-width=".5"/>`;
  const [c, d] = [m(turn(bedOuter[16])), m(turn(bedInner[16]))];
  out += `<path d="M${str([c])}Q${c[0] + 3 * s} ${c[1] + 5.5 * s} ${str([d])}l${8 * s} ${-3 * s}L${c[0] + 10 * s} ${c[1] - 1.5 * s}z" fill="#ab82ff"/>`;
}
track.innerHTML = out;
```
